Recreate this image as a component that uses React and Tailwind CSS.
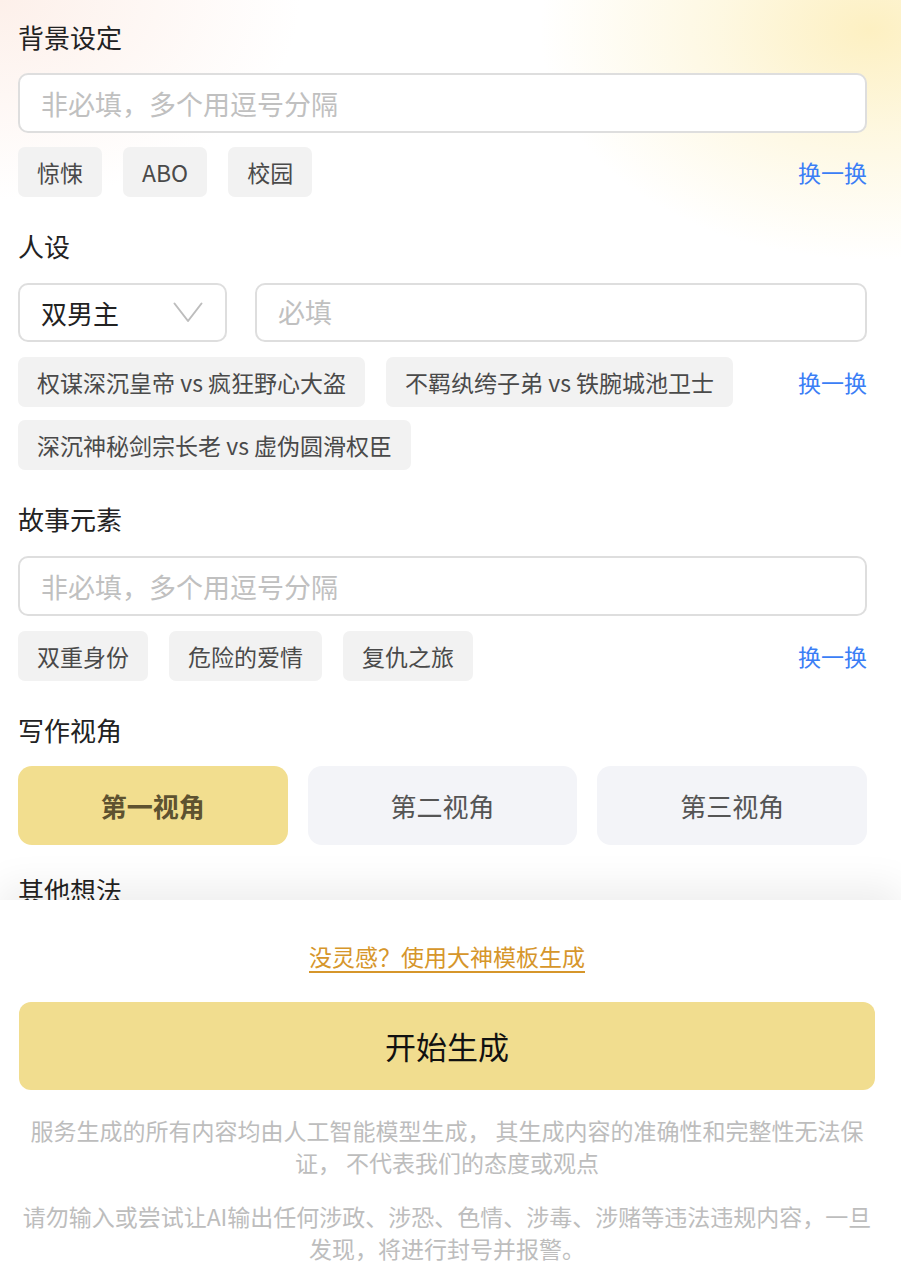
import React from "react";

function Title({ children }) {
  return <div className="h-[36px] leading-[36px] text-[26px] text-[#222]">{children}</div>;
}

function Input({ placeholder, className = "" }) {
  return (
    <div className={"h-[60px] rounded-[10px] border-2 border-[#dedede] bg-white flex items-center px-[21px] " + className}>
      <span className="text-[27px] text-[#c0c0c0] leading-none">{placeholder}</span>
    </div>
  );
}

function Tags({ items }) {
  return (
    <div className="flex items-start">
      <div className="flex flex-wrap gap-x-[21px] gap-y-[13px] flex-1 pr-[60px]">
        {items.map((t) => (
          <div key={t} className="h-[50px] px-[19px] rounded-[7px] bg-[#f2f2f2] flex items-center text-[23px] text-[#4a4a4a] whitespace-nowrap">
            {t}
          </div>
        ))}
      </div>
      <div className="h-[50px] flex items-center text-[23px] text-[#3b7ef6] whitespace-nowrap">换一换</div>
    </div>
  );
}

export default function App() {
  return (
    <div className="w-[901px] h-[1280px] flex flex-col overflow-hidden bg-white font-['Noto_Sans_CJK_SC','Noto_Sans',sans-serif]">
      <div className="flex-1 overflow-hidden bg-[radial-gradient(ellipse_330px_230px_at_870px_30px,#fdf0c2_0%,rgba(253,243,205,0.6)_45%,rgba(255,255,255,0)_100%),radial-gradient(ellipse_300px_200px_at_0px_0px,#fdf0ea_0%,rgba(255,255,255,0)_100%)] pl-[18px] pr-[34px] pt-[19px]">
        <Title>背景设定</Title>
        <Input placeholder="非必填，多个用逗号分隔" className="mt-[18px]" />
        <div className="mt-[14px]">
          <Tags items={["惊悚", "ABO", "校园"]} />
        </div>

        <div className="mt-[31px]">
          <Title>人设</Title>
        </div>
        <div className="mt-[19px] flex gap-[28px]">
          <div className="w-[209px] h-[59px] rounded-[10px] border-2 border-[#dedede] bg-white flex items-center justify-between pl-[21px] pr-[22px]">
            <span className="text-[26px] text-[#222]">双男主</span>
            <svg width="30" height="21" viewBox="0 0 30 21" fill="none">
              <path d="M1.5 1.5 L15 19 L28.5 1.5" stroke="#bdbdbd" strokeWidth="2" strokeLinejoin="round" strokeLinecap="round" />
            </svg>
          </div>
          <div className="flex-1 h-[59px] rounded-[10px] border-2 border-[#dedede] bg-white flex items-center px-[21px]">
            <span className="text-[27px] text-[#c0c0c0]">必填</span>
          </div>
        </div>
        <div className="mt-[15px]">
          <Tags items={["权谋深沉皇帝 vs 疯狂野心大盗", "不羁纨绔子弟 vs 铁腕城池卫士", "深沉神秘剑宗长老 vs 虚伪圆滑权臣"]} />
        </div>

        <div className="mt-[31px]">
          <Title>故事元素</Title>
        </div>
        <Input placeholder="非必填，多个用逗号分隔" className="mt-[19px]" />
        <div className="mt-[15px]">
          <Tags items={["双重身份", "危险的爱情", "复仇之旅"]} />
        </div>

        <div className="mt-[31px]">
          <Title>写作视角</Title>
        </div>
        <div className="mt-[18px] grid grid-cols-3 gap-[20px]">
          <div className="h-[79px] rounded-[14px] bg-[#f2de8f] flex items-center justify-center text-[26px] font-bold text-[#5e5230]">第一视角</div>
          <div className="h-[79px] rounded-[14px] bg-[#f3f4f8] flex items-center justify-center text-[26px] text-[#555]">第二视角</div>
          <div className="h-[79px] rounded-[14px] bg-[#f3f4f8] flex items-center justify-center text-[26px] text-[#555]">第三视角</div>
        </div>

        <div className="mt-[27px]">
          <Title>其他想法</Title>
        </div>
      </div>

      <div className="relative z-10 h-[380px] shrink-0 bg-white shadow-[0_-14px_36px_rgba(0,0,0,0.07)] pl-[19px] pr-[26px] pt-[40px]">
        <div className="text-center h-[32px] leading-[32px]">
          <span className="text-[23px] text-[#d6962b] underline underline-offset-[5px] decoration-[1.5px]">没灵感？使用大神模板生成</span>
        </div>
        <div className="mt-[30px] h-[88px] rounded-[12px] bg-[#f1dd8f] flex items-center justify-center text-[31px] text-[#111]">开始生成</div>
        <div className="mt-[24px] text-center text-[23px] leading-[32px] text-[#bdbdbd]">
          <p>服务生成的所有内容均由人工智能模型生成， 其生成内容的准确性和完整性无法保证， 不代表我们的态度或观点</p>
          <p className="mt-[22px]">请勿输入或尝试让AI输出任何涉政、涉恐、色情、涉毒、涉赌等违法违规内容，一旦发现，将进行封号并报警。</p>
        </div>
      </div>
    </div>
  );
}
